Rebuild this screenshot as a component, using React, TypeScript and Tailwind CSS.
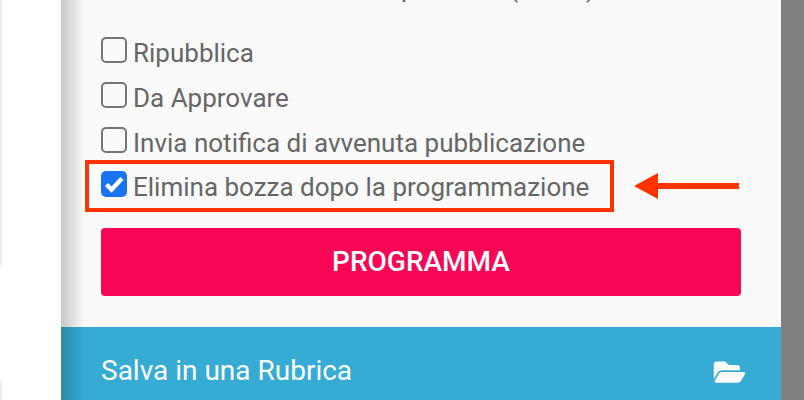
import React from 'react';

const options = ['Ripubblica', 'Da Approvare', 'Invia notifica di avvenuta pubblicazione'];

function Box({ checked }: { checked: boolean }) {
  if (checked) {
    return (
      <span className="flex h-[26px] w-[26px] shrink-0 items-center justify-center rounded-[5px] bg-[#1a73f0]">
        <svg viewBox="0 0 26 26" className="h-[26px] w-[26px]" fill="none" stroke="#fff" strokeWidth="4.4">
          <path d="M5.500 13.500l5 5L21 7.500" />
        </svg>
      </span>
    );
  }
  return <span className="h-[26px] w-[26px] shrink-0 rounded-[5px] border-2 border-[#767676] bg-[#fafafa]" />;
}

export default function App() {
  return (
    <div className="flex h-[400px] w-[804px] overflow-hidden bg-white font-['Roboto',sans-serif]">
      <div className="flex w-[61px] shrink-0 flex-col">
        <div className="h-[265px] w-[2px] bg-[#eeeeee]" />
        <div className="h-[115px]" />
        <div className="h-[20px] w-[2px] bg-[#eeeeee]" />
      </div>

      <div className="relative flex w-[720px] shrink-0 flex-col bg-[#fafafa]">
        {/* left edge shadow */}
        <div className="pointer-events-none absolute inset-y-0 left-0 w-[24px] bg-gradient-to-r from-black/20 to-transparent" />

        <div className="h-[327px] overflow-hidden px-[40px]">
          <p className="mt-[-26px] h-[63px] text-right pr-[146px] text-[26px] leading-[28px] text-[#666666]">Ora di partenza (Roma)</p>

          <div className="flex flex-col gap-[19px]">
            {options.map((label) => (
              <label key={label} className="flex h-[26px] items-start gap-[6px] text-[26px] leading-[32px] text-[#666666]">
                <Box checked={false} />
                <span>{label}</span>
              </label>
            ))}
          </div>

          <div className="mt-[7px] flex items-center">
            <div className="ml-[-16px] flex h-[52px] w-[529px] items-start gap-[6px] border-[4px] border-[#ff3300] pl-[12px] pt-[7px] text-[26px] leading-[32px] text-[#666666]">
              <Box checked />
              <span>Elimina bozza dopo la programmazione</span>
            </div>
            <svg viewBox="0 0 105 26" className="ml-[20px] h-[26px] w-[105px]">
              <path d="M0 13L24 0v10h81v6H24v10z" fill="#ff3300" />
            </svg>
          </div>

          <button className="mt-[16px] flex h-[68px] w-full items-center justify-center rounded-[4px] bg-[#f80555] text-[28px] font-medium text-white">
            PROGRAMMA
          </button>
        </div>

        <div className="flex h-[73px] items-start justify-between bg-[#36abd4] pl-[40px] pr-[35px] pt-[27px] text-[28px] leading-[34px] text-white">
          <span>Salva in una Rubrica</span>
          <svg viewBox="0 0 576 512" className="mt-[4px] h-[28px] w-[33px]" fill="#fff">
            <path d="M572.7 292.100L500.300 416.200c-12.600 21.600-35.700 34.800-60.700 34.800H40c-18.500 0-30-20.100-20.700-36.100l72.400-124.200c12.600-21.600 35.700-34.800 60.700-34.800h399.600c18.500 0 30 20.100 20.700 36.200zM152.400 224h328.100v-48c0-26.500-21.500-48-48-48h-160l-64-64H48C21.500 64 0 85.500 0 112v278l69.100-118.400C86.200 242.300 118.200 224 152.400 224z" />
          </svg>
        </div>
      </div>

      <div className="flex-1 bg-[#808080]" />
    </div>
  );
}
